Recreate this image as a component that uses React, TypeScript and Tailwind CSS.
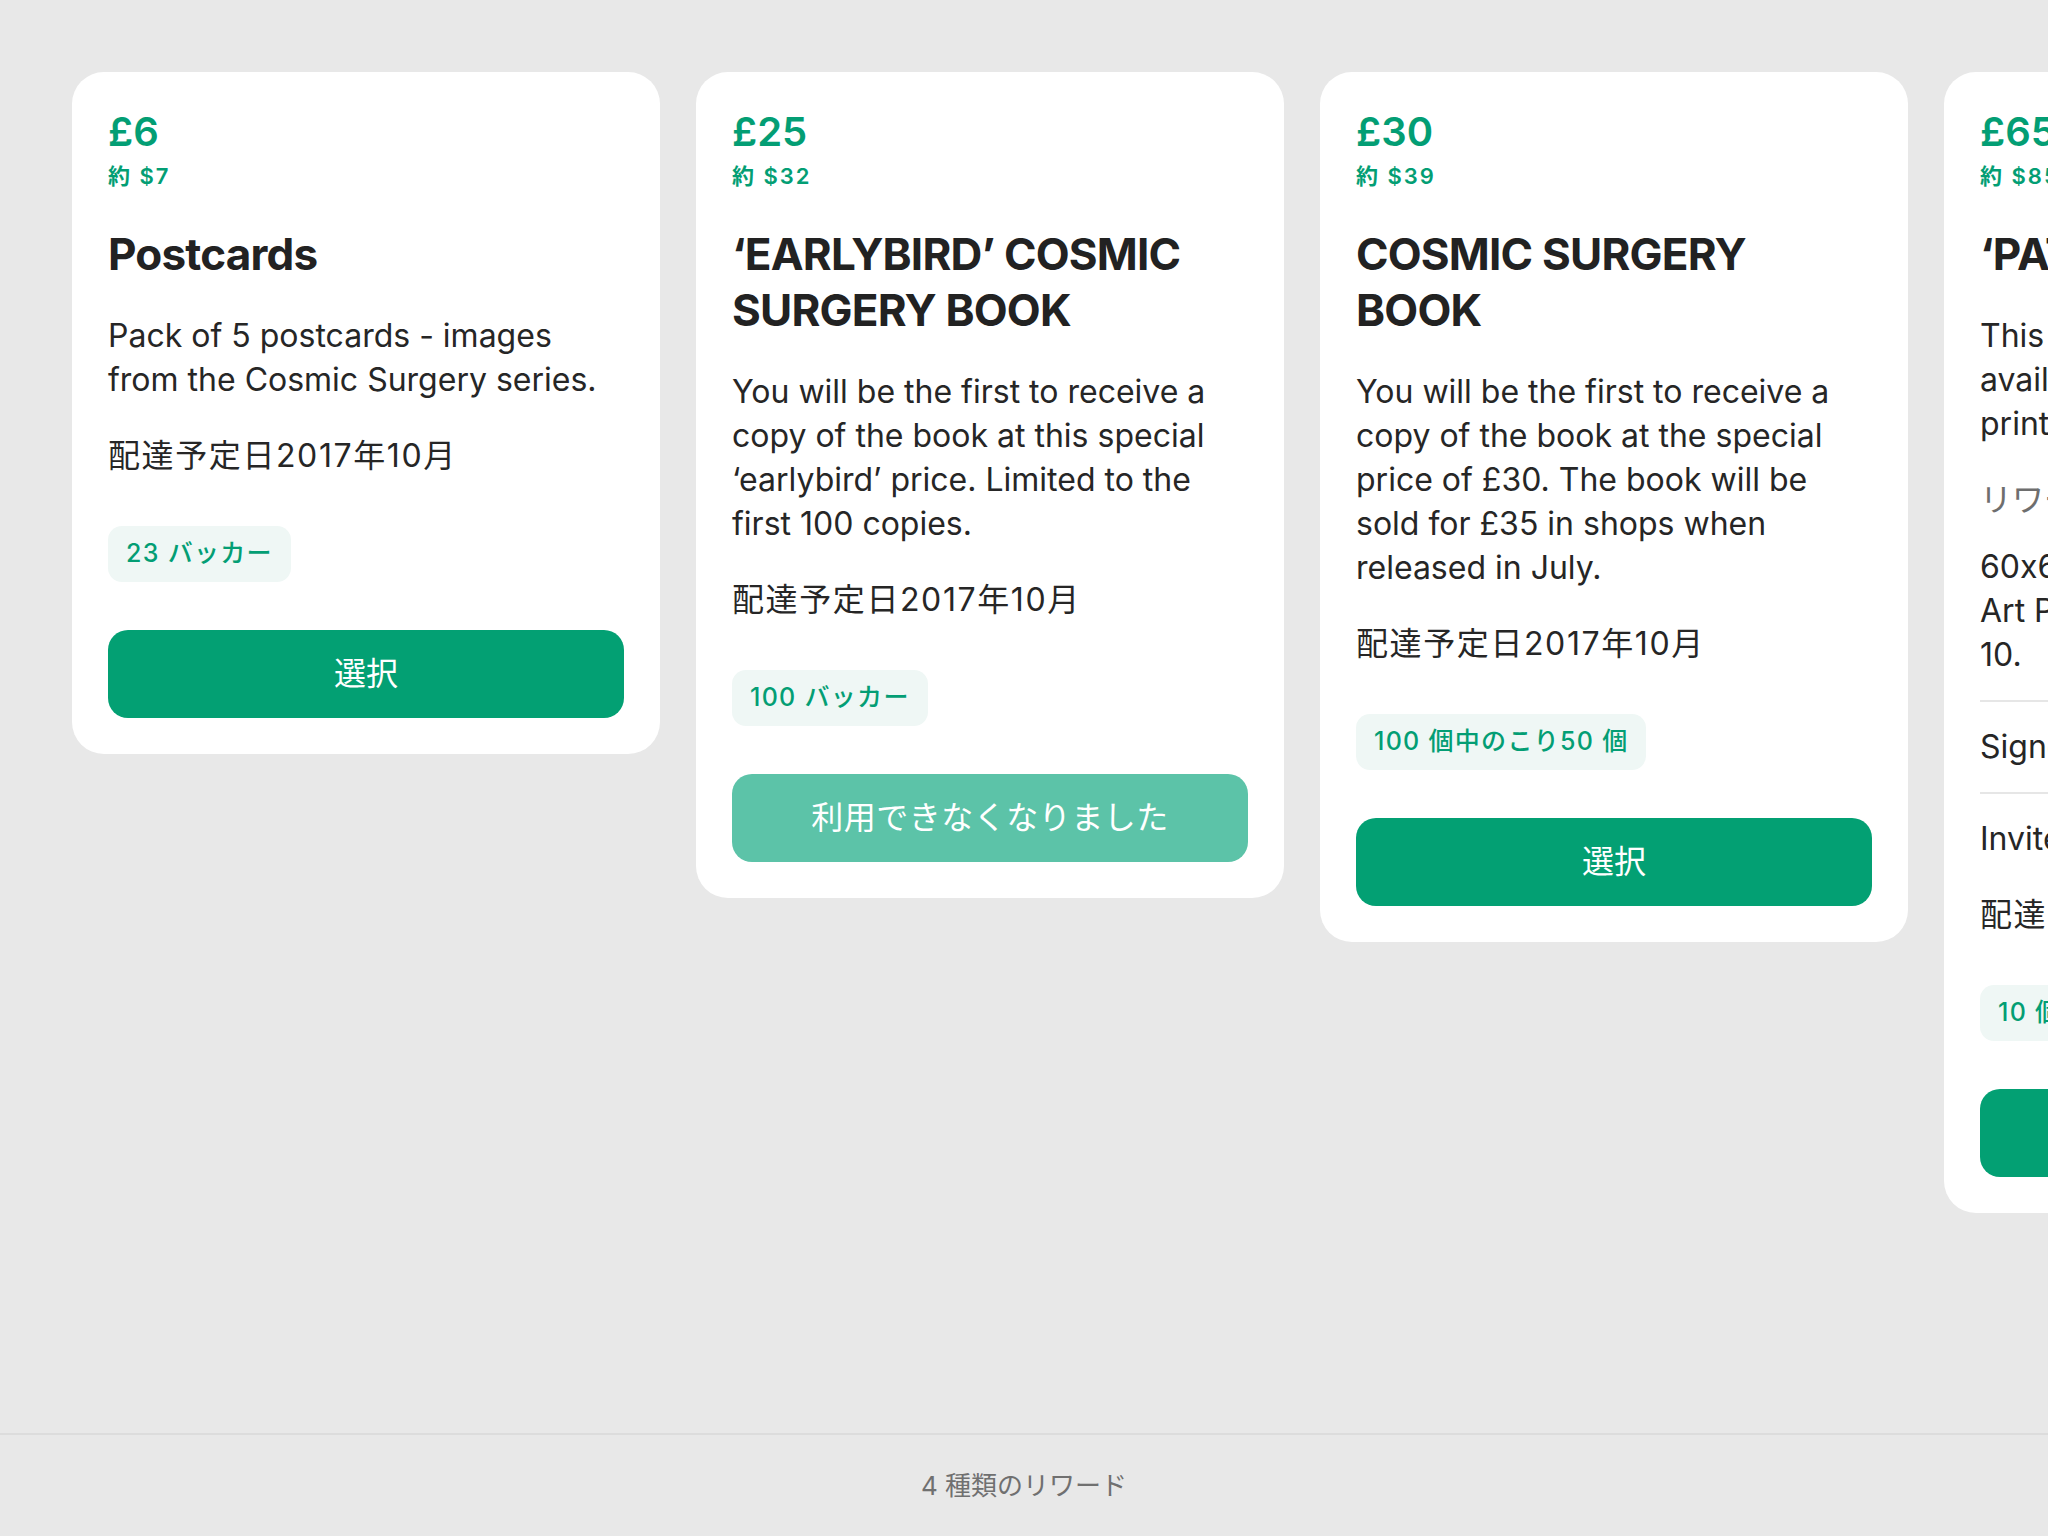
import React from "react";

type CardProps = {
  price: string;
  approx: string;
  title: string;
  children: React.ReactNode;
  badge: string;
  disabled?: boolean;
};

function RewardCard({ price, approx, title, children, badge, disabled }: CardProps) {
  return (
    <div className="w-[588px] shrink-0 bg-white rounded-[32px] p-[36px] flex flex-col">
      <div className="text-[40px] leading-[48px] font-semibold text-[#039e74]">{price}</div>
      <div className="text-[22px] leading-[40px] font-semibold tracking-[2px] text-[#039e74]">{approx}</div>
      <div className="mt-[30px] text-[44px] leading-[56px] font-bold tracking-[-0.8px] text-[#222222]">{title}</div>
      {children}
      <div className="mt-[32px] text-[32px] leading-[44px] tracking-[1.6px] text-[#262626]">配達予定日2017年10月</div>
      <div className="mt-[48px] self-start h-[56px] px-[18px] rounded-[14px] bg-[#eff7f5] text-[#039e74] text-[25px] font-medium tracking-[1.3px] flex items-center">
        {badge}
      </div>
      <button
        className={
          disabled
            ? "mt-[48px] h-[88px] w-full rounded-[20px] bg-[#5cc3a8] text-white text-[32px] flex items-center justify-center tracking-[0.5px]"
            : "mt-[48px] h-[88px] w-full rounded-[20px] bg-[#03a073] text-white text-[32px] flex items-center justify-center"
        }
      >
        {disabled ? "利用できなくなりました" : "選択"}
      </button>
    </div>
  );
}

function Body({ children }: { children: React.ReactNode }) {
  return <p className="mt-[32px] text-[32px] leading-[44px] text-[#262626]">{children}</p>;
}

export default function App() {
  return (
    <div className="h-screen w-full bg-[#e8e8e8] flex flex-col overflow-hidden font-['Inter','Noto_Sans_CJK_JP',sans-serif]">
      <div className="flex-1 overflow-hidden">
        <div className="flex items-start gap-[36px] pl-[72px] pt-[72px]">
          <RewardCard price="£6" approx="約 $7" title="Postcards" badge="23 バッカー">
            <Body>Pack of 5 postcards - images from the Cosmic Surgery series.</Body>
          </RewardCard>
          <RewardCard price="£25" approx="約 $32" title="‘EARLYBIRD’ COSMIC SURGERY BOOK" badge="100 バッカー" disabled>
            <Body>
              You will be the first to receive a copy of the book at this special ‘earlybird’ price. Limited to the first
              100 copies.
            </Body>
          </RewardCard>
          <RewardCard price="£30" approx="約 $39" title="COSMIC SURGERY BOOK" badge="100 個中のこり50 個">
            <Body>
              You will be the first to receive a copy of the book at the special price of £30. The book will be sold for
              £35 in shops when released in July.
            </Body>
          </RewardCard>
          <RewardCard price="£65" approx="約 $85" title="‘PATIENT’ PRINT" badge="10 個中のこり10 個">
            <Body>
              This image is
              <br />
              available as a limited edition
              <br />
              print from the series.
            </Body>
            <div className="mt-[32px] text-[32px] leading-[44px] text-[#6e6e6e]">リワードに含まれるもの</div>
            <ul className="text-[32px] leading-[44px] text-[#262626]">
              <li className="py-[23px] [font-feature-settings:'calt'_0]">
                60x60cm Giclée print on Fine
                <br />
                Art Paper. Limited edition of
                <br />
                10.
              </li>
              <li className="py-[23px] border-t-2 border-[#e6e6e6]">Signed by the artist</li>
              <li className="pt-[23px] border-t-2 border-[#e6e6e6]">Invite to the launch party</li>
            </ul>
          </RewardCard>
        </div>
      </div>
      <div className="h-[103px] shrink-0 border-t-2 border-[#dcdcdc] flex items-center justify-center text-[26px] text-[#707070]">
        4 種類のリワード
      </div>
    </div>
  );
}
